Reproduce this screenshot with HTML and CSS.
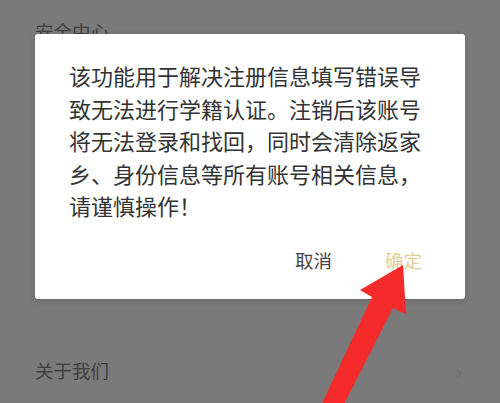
FILE: index.html
```html
<!DOCTYPE html>
<html lang="zh-CN">
<head>
<meta charset="utf-8">
<title>注销账号</title>
<link rel="stylesheet" href="styles.css">
</head>
<body>
<div class="page">
  <div class="row"><span class="label">安全中心</span><span class="chev">›</span></div>
  <div class="spacer"></div>
  <div class="row"><span class="label">关于我们</span><span class="chev">›</span></div>
</div>
<div class="mask">
  <div class="dialog">
    <p class="msg">该功能用于解决注册信息填写错误导致无法进行学籍认证。注销后该账号将无法登录和找回，同时会清除返家乡、身份信息等所有账号相关信息，请谨慎操作！</p>
    <div class="actions">
      <span class="btn cancel">取消</span>
      <span class="btn ok">确定</span>
    </div>
  </div>
</div>
<svg class="arrow" width="500" height="403" viewBox="0 0 500 403">
  <polygon points="403,265 406,314 393,308 340,412 318,412 372,297 360,290" fill="#f52a2a"/>
</svg>
</body>
</html>
```

FILE: styles.css
```css
html, body {
  margin: 0;
  padding: 0;
}
body {
  width: 500px;
  height: 403px;
  overflow: hidden;
  position: relative;
  background: #f5f5f5;
  font-family: "Noto Sans CJK SC", "Noto Sans", sans-serif;
}
.page {
  display: flex;
  flex-direction: column;
  padding: 4px 0 0 35px;
}
.row {
  display: flex;
  align-items: center;
  justify-content: space-between;
  height: 54px;
  padding-right: 38px;
}
.label {
  font-size: 18.5px;
  color: #7e7e7e;
}
.chev {
  font-size: 22px;
  color: #e0e0e0;
  line-height: 1;
}
.spacer {
  height: 285px;
}
.mask {
  position: absolute;
  inset: 0;
  background: rgba(0, 0, 0, 0.5);
  display: flex;
  justify-content: center;
  align-items: flex-start;
  padding-top: 34px;
}
.dialog {
  width: 430px;
  box-sizing: border-box;
  background: #ffffff;
  border-radius: 3px;
  padding: 25px 42px 27px 34px;
  box-shadow: 0 2px 6px rgba(0, 0, 0, 0.15);
}
.msg {
  margin: 0;
  font-size: 22px;
  line-height: 32.5px;
  color: #333333;
}
.actions {
  display: flex;
  justify-content: flex-end;
  gap: 53px;
  margin-top: 26px;
  padding-right: 1px;
}
.btn {
  font-size: 18.5px;
  line-height: 24px;
}
.cancel {
  color: #444444;
}
.ok {
  color: #e3cf94;
}
.arrow {
  position: absolute;
  left: 0;
  top: 0;
  pointer-events: none;
}
```
